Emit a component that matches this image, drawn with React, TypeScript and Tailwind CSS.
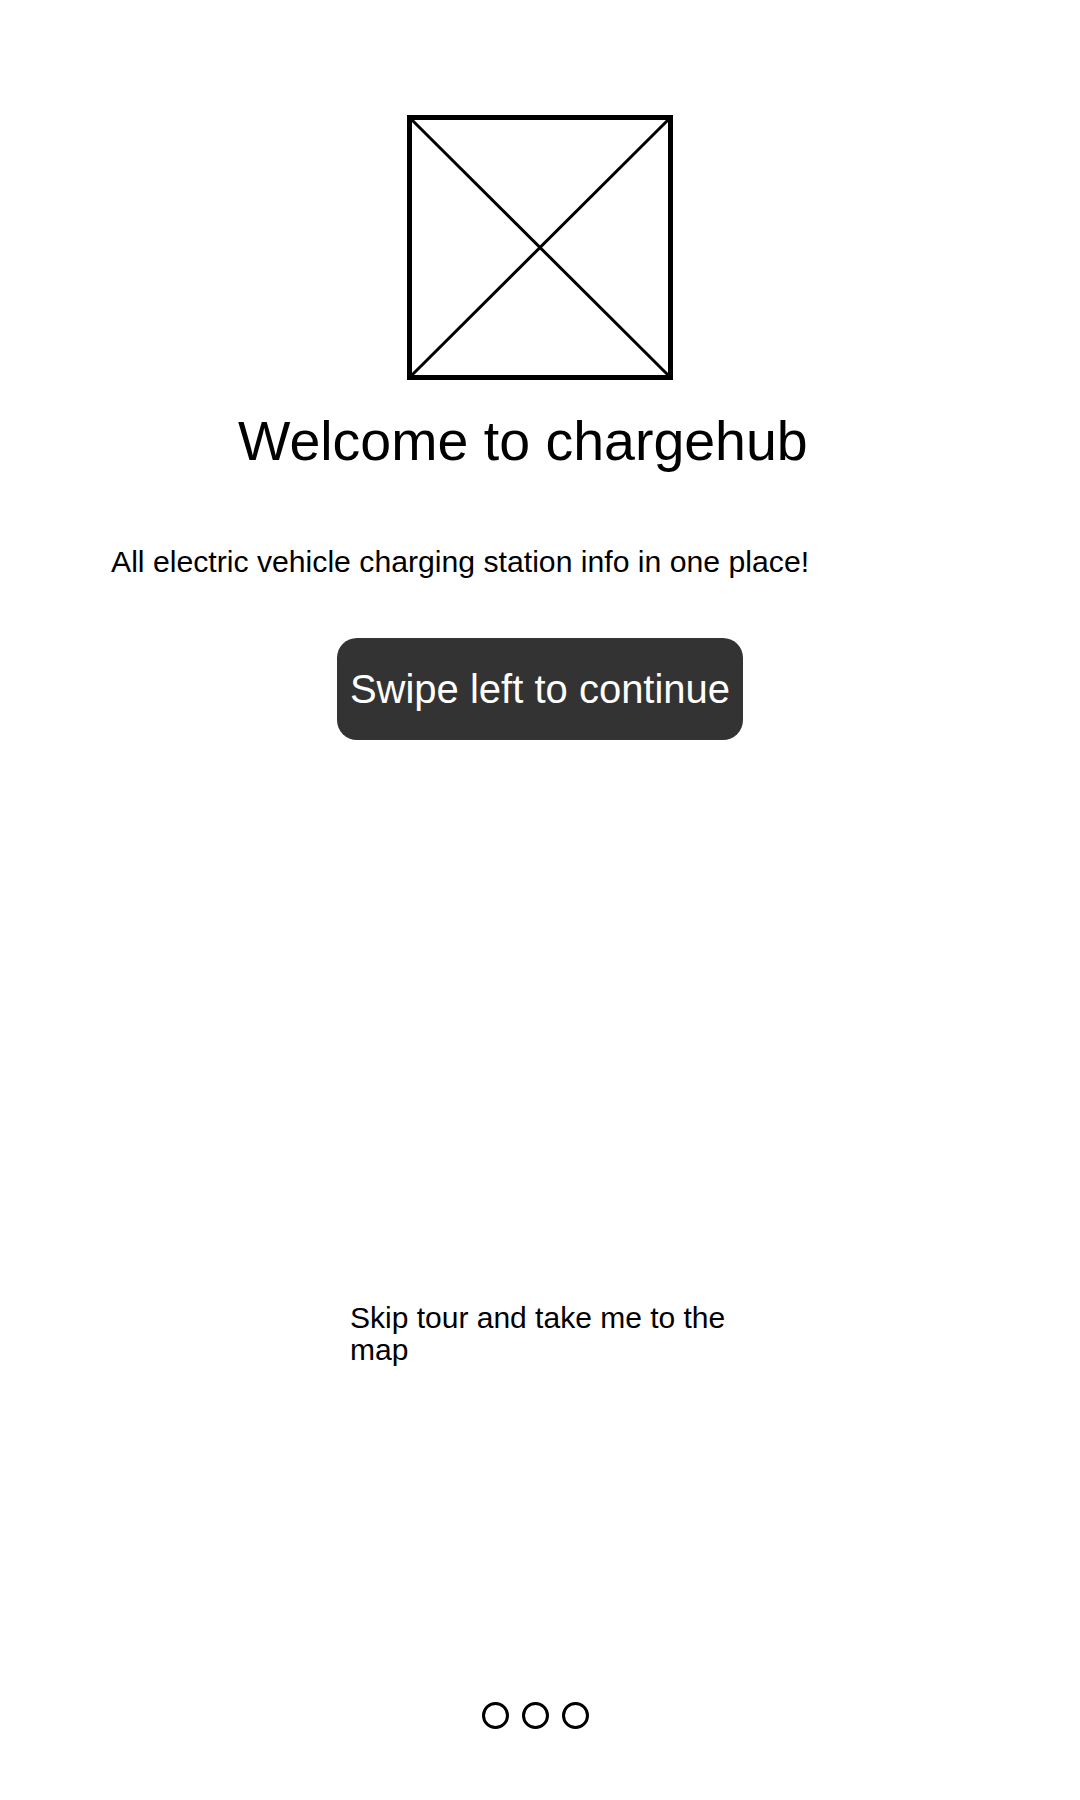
import React from "react";

const Placeholder = () => (
  <svg width="266" height="265" viewBox="0 0 266 265" className="block">
    <rect x="2.5" y="2.5" width="261" height="260" fill="none" stroke="#000" strokeWidth="5" />
    <line x1="3" y1="3" x2="263" y2="262" stroke="#000" strokeWidth="3" />
    <line x1="263" y1="3" x2="3" y2="262" stroke="#000" strokeWidth="3" />
  </svg>
);

const Dot = () => <div className="h-[27px] w-[27px] rounded-full border-[3px] border-black" />;

export default function App() {
  return (
    <div className="flex min-h-[1800px] w-full flex-col items-center bg-white font-['Liberation_Sans',Arial,sans-serif] text-black">
      <div className="mt-[115px]">
        <Placeholder />
      </div>

      <h1 className="mt-[30px] self-start pl-[238px] text-[55.5px] leading-[62px] font-normal">
        Welcome to chargehub
      </h1>

      <p className="mt-[73px] self-start pl-[111px] text-[30.2px] leading-[34px]">
        All electric vehicle charging station info in one place!
      </p>

      <button className="mt-[59px] h-[102px] w-[406px] rounded-[20px] bg-[#333333] text-[40px] text-white">
        Swipe left to continue
      </button>

      <div className="mt-[562px] w-[406px] pl-[13px] pr-[12px] text-[30px] leading-[32px]">
        Skip tour and take me to the map
      </div>

      <div className="mt-[336px] mr-[9px] flex gap-[13px]">
        <Dot />
        <Dot />
        <Dot />
      </div>
    </div>
  );
}
